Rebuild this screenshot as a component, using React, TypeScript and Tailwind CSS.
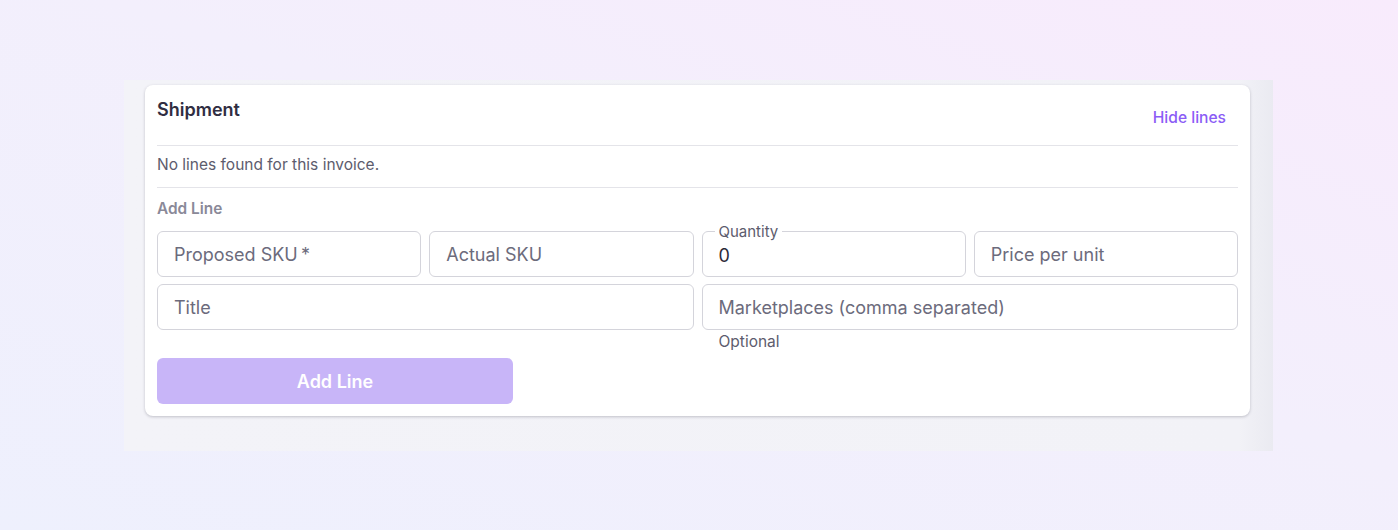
const fields = ["Proposed SKU\u2009*", "Actual SKU"]

function TextField({ placeholder, className = "" }: { placeholder: string; className?: string }) {
  return (
    <input
      type="text"
      placeholder={placeholder}
      className={`h-[46px] w-full rounded-[6px] border border-[#d4d4db] bg-white px-[16px] text-[18px] text-[#2b2a38] placeholder:text-[#6c6b7c] outline-none ${className}`}
    />
  )
}

export default function App() {
  return (
    <div
      className="min-h-[530px] w-full bg-[linear-gradient(20deg,#eef0fd_0%,#f3effc_55%,#f8ebfc_100%)] pt-[80px]"
      style={{ fontFamily: "Inter, 'Noto Sans', sans-serif" }}
    >
      <div className="ml-[124px] w-[1149px] bg-[linear-gradient(to_right,#f3f3f8_0%,#f2f2f7_97%,#eaeaf1_100%)] pb-[35px] pl-[21px] pr-[23px] pt-[5px]">
        <div className="rounded-[8px] bg-white px-[12px] pb-[12px] pt-[12px] shadow-[0_1px_3px_rgba(40,40,60,0.25)]">
          <div className="flex h-[48px] items-start justify-between">
            <h3 className="text-[18px] font-semibold leading-[26px] text-[#302d42]">Shipment</h3>
            <button className="mr-[12px] mt-[11px] text-[15.6px] font-medium leading-[20px] text-[#8b5cf6]">
              Hide lines
            </button>
          </div>

          <div className="h-[42px] border-t border-[#e4e4e9] pt-[8px]">
            <p className="text-[15.5px] leading-[22px] text-[#5d5c6d]">No lines found for this invoice.</p>
          </div>

          <div className="border-t border-[#e4e4e9] pt-[11px]">
            <p className="mb-[12px] text-[15.4px] font-semibold leading-[20px] text-[#8a8998]">Add Line</p>

            <div className="grid grid-cols-4 gap-x-[8px] gap-y-[7px]">
              {fields.map((f) => (
                <TextField key={f} placeholder={f} />
              ))}
              <div className="relative">
                <span className="absolute -top-[7px] left-[13px] bg-white px-[4px] text-[15px] leading-[16px] text-[#5d5c6d]">
                  Quantity
                </span>
                <input
                  type="text"
                  defaultValue="0"
                  className="h-[46px] w-full rounded-[6px] border border-[#d4d4db] bg-white px-[16px] pt-[2px] text-[18px] text-[#2b2a38] outline-none"
                />
              </div>
              <TextField placeholder="Price per unit" />
              <TextField placeholder="Title" className="col-span-2" />
              <TextField placeholder="Marketplaces (comma separated)" className="col-span-2" />
              <p className="col-span-2 col-start-3 -mt-[5px] pl-[17px] text-[15.5px] leading-[20px] text-[#5d5c6d]">
                Optional
              </p>
            </div>

            <button
              disabled
              className="mt-[6px] h-[46px] w-[356px] rounded-[6px] bg-[#c8b5f8] text-[18px] font-semibold text-white"
            >
              Add Line
            </button>
          </div>
        </div>
      </div>
    </div>
  )
}
